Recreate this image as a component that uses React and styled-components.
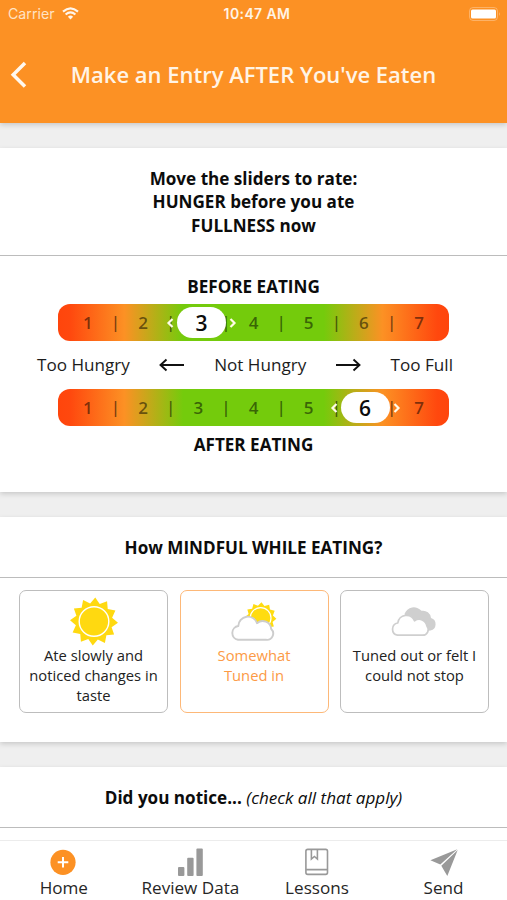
import React from "react";
import styled, { createGlobalStyle } from "styled-components";

const ORANGE = "#fc9124";

const GlobalStyle = createGlobalStyle`
  * { box-sizing: border-box; }
  body { margin: 0; background: #efefef; font-family: "Open Sans", "Noto Sans", sans-serif; color: #0c0c0c; }
`;

const Screen = styled.div`
  width: 507px;
  height: 900px;
  overflow: hidden;
  display: flex;
  flex-direction: column;
  background: #efefef;
`;

const Header = styled.header`
  flex: none;
  height: 123px;
  background: ${ORANGE};
  color: #fff4e6;
  box-shadow: 0 2px 5px rgba(0, 0, 0, 0.16);
`;

const StatusBar = styled.div`
  height: 27px;
  padding: 0 1px 0 8px;
  display: grid;
  grid-template-columns: 1fr auto 1fr;
  align-items: center;
  font-family: Inter, sans-serif;
  font-size: 14.2px;
`;

const Carrier = styled.span`
  display: flex;
  align-items: center;
  gap: 7px;
  color: #ffe3c4;
`;

const Time = styled.span`
  font-weight: 600;
  font-size: 14px;
  letter-spacing: 0.4px;
`;

const BatterySlot = styled.span`
  display: flex;
  justify-content: flex-end;
`;

const TitleBar = styled.div`
  height: 94px;
  display: grid;
  grid-template-columns: 40px 1fr 40px;
  align-items: center;
`;

const BackButton = styled.button`
  border: 0;
  background: none;
  padding: 1px 0 0 9px;
  height: 40px;
  display: flex;
  align-items: center;
`;

const Title = styled.h1`
  margin: 0;
  text-align: center;
  font-size: 22px;
  font-weight: 600;
  line-height: 30px;
  white-space: nowrap;
`;

const Content = styled.main`
  flex: 1;
  min-height: 0;
  overflow: hidden;
  padding-top: 25px;
  display: flex;
  flex-direction: column;
  gap: 25px;
`;

const Card = styled.section`
  flex: none;
  height: ${(p) => p.$height}px;
  background: #fff;
  box-shadow: 0 2px 5px rgba(0, 0, 0, 0.16);
`;

const CardHeader = styled.h2`
  margin: 0;
  height: ${(p) => p.$height}px;
  padding-top: 1.4px;
  border-bottom: 1px solid #bcbcbc;
  display: flex;
  align-items: center;
  justify-content: center;
  text-align: center;
  font-size: 17.1px;
  line-height: 23.6px;
  font-weight: 700;
  white-space: pre;
`;

const Hint = styled.em`
  font-weight: 400;
`;

const Scales = styled.div`
  padding-top: 19px;
  display: flex;
  flex-direction: column;
  align-items: center;
`;

const ScaleName = styled.div`
  height: 24px;
  line-height: 24px;
  font-size: 17.1px;
  font-weight: 700;
`;

const Track = styled.div`
  position: relative;
  width: 391px;
  height: 37px;
  margin: ${(p) => p.$margin};
  padding: 0 16px;
  border-radius: 12px;
  display: grid;
  grid-template-columns: repeat(13, 1fr);
  align-items: center;
  justify-items: center;
  background: linear-gradient(90deg, #ff450c 0%, #ff480e 3%, #fc9124 17%, #74cb0c 32%, #74cb0c 68%, #fc9124 83%, #ff480e 97%, #ff450c 100%);
`;

const Tick = styled.span`
  font-size: 17px;
  line-height: 36px;
  font-weight: 600;
  color: rgba(0, 0, 0, 0.52);
`;

const Divider = styled(Tick)`
  padding-bottom: 1px;
`;

const Thumb = styled.div`
  position: absolute;
  top: 2.5px;
  left: ${(p) => p.$left}px;
  width: 71px;
  height: 32px;
  display: flex;
  align-items: center;
  justify-content: space-between;
`;

const Pill = styled.div`
  width: 49px;
  height: 31px;
  border-radius: 16px;
  background: #fff;
  text-align: center;
  font-size: 21px;
  line-height: 32px;
  font-weight: 600;
`;

const Legend = styled.div`
  width: 416px;
  height: 48px;
  margin-right: 17px;
  padding-bottom: 1px;
  display: flex;
  align-items: center;
  justify-content: space-between;
  font-size: 17.1px;
  color: #1c1c1c;
`;

const Options = styled.div`
  padding: 12px 18px 0 19px;
  display: grid;
  grid-template-columns: repeat(3, 149px);
  justify-content: space-between;
`;

const Option = styled.button`
  height: 123px;
  padding: 3px 0 0;
  border: 1px solid ${(p) => (p.$selected ? "#fdb878" : "#bdbdbd")};
  border-radius: 7px;
  background: #fff;
  color: ${(p) => (p.$selected ? "#fc9a45" : "#222")};
  display: flex;
  flex-direction: column;
  align-items: center;
  font-family: inherit;
  font-size: 14.75px;
  line-height: 20px;
  white-space: pre;
`;

const OptionIcon = styled.svg`
  flex: none;
  width: 56px;
  height: 52px;
  margin-bottom: -0.6px;
`;

const TabBar = styled.nav`
  flex: none;
  height: 60px;
  background: #fff;
  border-top: 1px solid #ececec;
  display: grid;
  grid-template-columns: repeat(4, 126.6px);
`;

const Tab = styled.button`
  border: 0;
  padding: 6px 0 0 1px;
  background: none;
  display: flex;
  flex-direction: column;
  align-items: center;
  font-family: inherit;
  font-size: 17.1px;
  line-height: 22px;
  color: #262626;
`;

const TabIcon = styled.svg`
  width: 32px;
  height: 30px;
`;

const WifiIcon = () => (
  <svg width="17" height="13" viewBox="0 0 17 13" fill="none" stroke="#fff6ec" strokeWidth="2.1">
    <path d="M1 4.6Q8.5-2 16 4.6M3.6 7.5Q8.5 3.2 13.4 7.5" />
    <path d="M8.5 12.4 5.9 9.7Q8.5 7.5 11.1 9.7Z" fill="#fff6ec" stroke="none" />
  </svg>
);

const BatteryIcon = () => (
  <svg width="37" height="14" viewBox="0 0 37 14">
    <rect x="0.5" y="0.5" width="28" height="13" rx="3.5" fill="none" stroke="#fff" strokeOpacity="0.3" />
    <rect x="2" y="2.5" width="25" height="9" rx="1.5" fill="#fff" />
    <path d="M30 5q1.5 2 0 4z" fill="#fff" opacity="0.45" />
  </svg>
);

const BackIcon = () => (
  <svg width="18" height="28" viewBox="0 0 18 28" fill="none" stroke="#fff8ef" strokeWidth="3.5">
    <path d="M16 2 4.2 13.8 16 25.6" />
  </svg>
);

const Chevron = ({ right }) => (
  <svg width="8" height="12" viewBox="0 0 8 12" fill="none" stroke="#fffbe8" strokeWidth="2.2">
    <path d={right ? "M1.5 2 5.5 6 1.5 10" : "M6.5 2 2.5 6 6.5 10"} />
  </svg>
);

const Arrow = ({ right }) => (
  <svg width="26" height="14" viewBox="0 0 26 14" fill="none" stroke="#111" strokeWidth="1.9">
    <path d={right ? "M1 7H24.5M18.5 1.5 24.5 7 18.5 12.5" : "M25 7H1.5M7.5 1.5 1.5 7 7.5 12.5"} />
  </svg>
);

const sunPoints = (cx, cy, outer, inner, turn) =>
  Array.from({ length: 24 }, (_, i) => {
    const a = ((i * 15 + turn) * Math.PI) / 180;
    const r = i % 2 ? inner : outer;
    return `${(cx + r * Math.sin(a)).toFixed(2)},${(cy - r * Math.cos(a)).toFixed(2)}`;
  }).join(" ");

const Sun = () => (
  <OptionIcon viewBox="0 0 56 52">
    <polygon points={sunPoints(28, 27.5, 24, 18.5, 3)} fill="#ffd910" />
    <circle cx="28" cy="27.5" r="14.8" fill="#ffd910" stroke="#fff" strokeWidth="1.4" />
  </OptionIcon>
);

const PartlyCloudy = () => (
  <OptionIcon viewBox="0 0 56 52">
    <polygon points={sunPoints(34.6, 24, 15.8, 12.6, 3)} fill="#ffdc10" />
    <circle cx="34.6" cy="24" r="10.4" fill="#ffdc10" stroke="#fff" strokeWidth="1.2" />
    <path
      d="M12 45.8A7 7 0 0 1 12.3 32A9.6 9.6 0 0 1 31 29.2A8.6 8.6 0 0 1 45.2 35A6.3 6.3 0 0 1 40 45.8Z"
      fill="#fff"
      stroke="#cdcdcd"
      strokeWidth="1.9"
      strokeLinejoin="round"
    />
  </OptionIcon>
);

const Clouds = () => (
  <OptionIcon viewBox="0 0 56 52">
    <path d="M17.5 20A10 10 0 0 1 34.5 16.8A8 8 0 0 1 44 24A6.4 6.4 0 0 1 43.5 36.4L30 38Z" fill="#cfcfcf" />
    <path
      d="M10.5 41.2A6.2 6.2 0 0 1 10.8 29A8.7 8.7 0 0 1 27.5 26.8A7.8 7.8 0 0 1 39.9 32A5.6 5.6 0 0 1 35.5 41.2Z"
      fill="#fff"
      stroke="#cfcfcf"
      strokeWidth="1.7"
      strokeLinejoin="round"
    />
  </OptionIcon>
);

const HomeIcon = () => (
  <TabIcon viewBox="0 0 32 30">
    <circle cx="15" cy="15.3" r="12.6" fill={ORANGE} />
    <path d="M15 10v10.6M9.7 15.3h10.6" stroke="#fff" strokeWidth="2" />
  </TabIcon>
);

const ChartIcon = () => (
  <TabIcon viewBox="0 0 32 30" fill="#999">
    <rect x="4" y="20" width="6.4" height="9" rx="1" />
    <rect x="13.2" y="10.8" width="6.4" height="18.2" rx="1" />
    <rect x="22.4" y="1.6" width="6.4" height="27.4" rx="1" />
  </TabIcon>
);

const BookIcon = () => (
  <TabIcon viewBox="0 0 32 30" fill="none" stroke="#999" strokeWidth="1.6">
    <rect x="4.9" y="2.4" width="21.6" height="25" rx="1.8" />
    <path d="M5.1 22.6H26.3M10.4 2.8v9.3l3-2.6 3 2.6V2.8" />
  </TabIcon>
);

const SendIcon = () => (
  <TabIcon viewBox="0 0 32 30" fill="#999">
    <path d="M29.3 2.3 2.4 13.3 12.3 17.5ZM29.7 3 13.3 18.7 19.3 29Z" />
  </TabIcon>
);

const Scale = ({ value, left, margin }) => (
  <Track $margin={margin}>
    {Array.from({ length: 13 }, (_, i) => {
      if (i % 2) return <Divider key={i}>|</Divider>;
      const n = i / 2 + 1;
      return <Tick key={i}>{n === value ? "" : n}</Tick>;
    })}
    <Thumb $left={left}>
      <Chevron />
      <Pill>{value}</Pill>
      <Chevron right />
    </Thumb>
  </Track>
);

export default function App() {
  return (
    <Screen>
      <GlobalStyle />
      <Header>
        <StatusBar>
          <Carrier>Carrier <WifiIcon /></Carrier>
          <Time>10:47 AM</Time>
          <BatterySlot><BatteryIcon /></BatterySlot>
        </StatusBar>
        <TitleBar>
          <BackButton aria-label="Back"><BackIcon /></BackButton>
          <Title>Make an Entry AFTER You've Eaten</Title>
        </TitleBar>
      </Header>
      <Content>
        <Card $height={344}>
          <CardHeader $height={108}>{"Move the sliders to rate:\nHUNGER before you ate\nFULLNESS now"}</CardHeader>
          <Scales>
            <ScaleName>BEFORE EATING</ScaleName>
            <Scale value={3} left={108} margin="5px 0 0" />
            <Legend>
              <span>Too Hungry</span>
              <Arrow />
              <span>Not Hungry</span>
              <Arrow right />
              <span>Too Full</span>
            </Legend>
            <Scale value={6} left={271.5} margin="0 0 7px" />
            <ScaleName>AFTER EATING</ScaleName>
          </Scales>
        </Card>
        <Card $height={225}>
          <CardHeader $height={61}>How MINDFUL WHILE EATING?</CardHeader>
          <Options>
            <Option><Sun />{"Ate slowly and\nnoticed changes in\ntaste"}</Option>
            <Option $selected><PartlyCloudy />{"Somewhat\nTuned in"}</Option>
            <Option><Clouds />{"Tuned out or felt I\ncould not stop"}</Option>
          </Options>
        </Card>
        <Card $height={225}>
          <CardHeader $height={61}>Did you notice... <Hint>(check all that apply)</Hint></CardHeader>
        </Card>
      </Content>
      <TabBar>
        <Tab><HomeIcon />Home</Tab>
        <Tab><ChartIcon />Review Data</Tab>
        <Tab><BookIcon />Lessons</Tab>
        <Tab><SendIcon />Send</Tab>
      </TabBar>
    </Screen>
  );
}
